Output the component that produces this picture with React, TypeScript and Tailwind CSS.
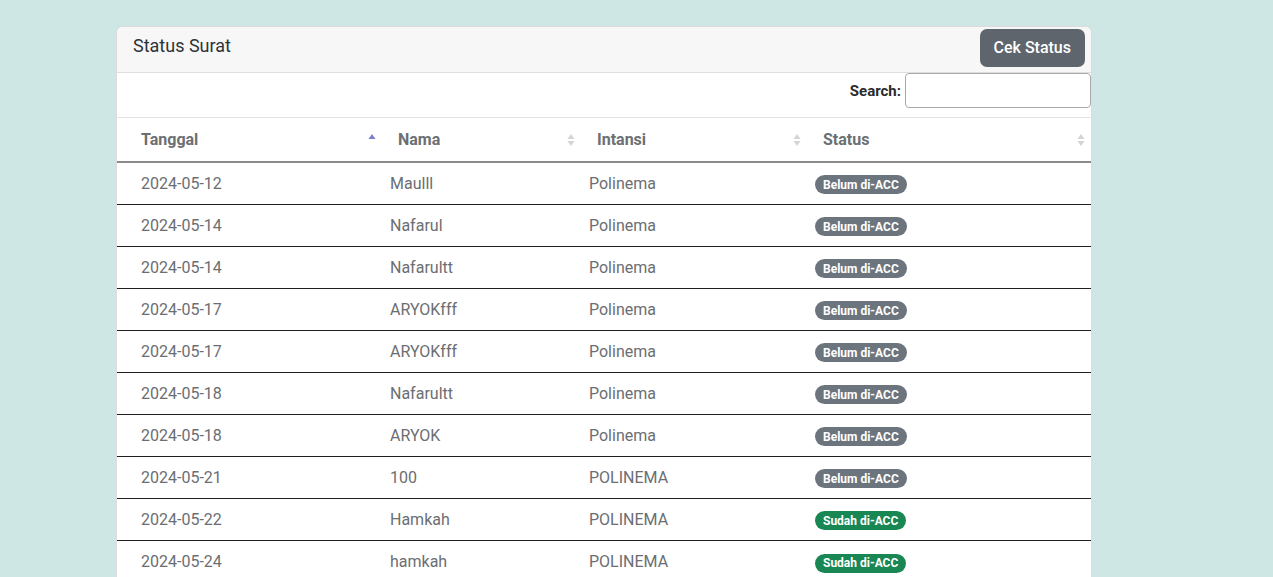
import { type ReactNode } from "react";

// ── Data ─────────────────────────────────────────────────────────────

type Row = { tanggal: string; nama: string; intansi: string; acc: boolean };

const ROWS: Row[] = [
	{ tanggal: "2024-05-12", nama: "Maulll", intansi: "Polinema", acc: false },
	{ tanggal: "2024-05-14", nama: "Nafarul", intansi: "Polinema", acc: false },
	{ tanggal: "2024-05-14", nama: "Nafarultt", intansi: "Polinema", acc: false },
	{ tanggal: "2024-05-17", nama: "ARYOKfff", intansi: "Polinema", acc: false },
	{ tanggal: "2024-05-17", nama: "ARYOKfff", intansi: "Polinema", acc: false },
	{ tanggal: "2024-05-18", nama: "Nafarultt", intansi: "Polinema", acc: false },
	{ tanggal: "2024-05-18", nama: "ARYOK", intansi: "Polinema", acc: false },
	{ tanggal: "2024-05-21", nama: "100", intansi: "POLINEMA", acc: false },
	{ tanggal: "2024-05-22", nama: "Hamkah", intansi: "POLINEMA", acc: true },
	{ tanggal: "2024-05-24", nama: "hamkah", intansi: "POLINEMA", acc: true },
];

const GRID = "grid grid-cols-[265px_199px_226px_284px]";

// ── Sort arrows ──────────────────────────────────────────────────────

function SortIcon({ active }: { active?: boolean }) {
	if (active) {
		return (
			<svg width="8" height="14" viewBox="0 0 8 14" className="shrink-0">
				<path d="M4 1 L7.5 6 L0.5 6 Z" fill="#7b7fd0" />
			</svg>
		);
	}
	return (
		<svg width="8" height="14" viewBox="0 0 8 14" className="shrink-0">
			<path d="M4 1 L7.5 6 L0.5 6 Z" fill="#d4d4d4" />
			<path d="M4 13 L7.5 8 L0.5 8 Z" fill="#d4d4d4" />
		</svg>
	);
}

function HeadCell({ children, first, active }: { children: ReactNode; first?: boolean; active?: boolean }) {
	return (
		<div
			className={`flex h-[43px] items-center justify-between pr-[6px] ${first ? "pl-[24px]" : "pl-[16px]"}`}
		>
			<span className="text-[16px] font-bold text-[#6c6f73]">{children}</span>
			<SortIcon active={active} />
		</div>
	);
}

function Badge({ acc }: { acc: boolean }) {
	return (
		<span
			className={`inline-flex h-[19px] items-center rounded-full px-[8px] text-[12px] font-bold leading-none text-white ${acc ? "bg-[#198754]" : "bg-[#6c757d]"}`}
		>
			{acc ? "Sudah di-ACC" : "Belum di-ACC"}
		</span>
	);
}

// ── Page ─────────────────────────────────────────────────────────────

export default function App() {
	return (
		<div
			className="h-[577px] overflow-hidden bg-[#cfe7e4] pt-[26px] pl-[116px]"
			style={{ fontFamily: "Roboto, 'Liberation Sans', sans-serif" }}
		>
			<div className="w-[976px] overflow-hidden rounded-t-[7px] border border-[#dcdcdc] bg-white">
				{/* Header */}
				<div className="flex h-[46px] items-start justify-between border-b border-[#dedede] bg-[#f7f7f7] pl-[16px] pr-[6px] pt-[2px]">
					<h2 className="mt-[3px] text-[18px] font-normal text-[#2e3338]">Status Surat</h2>
					<button className="h-[38px] rounded-[7px] bg-[#5e656c] px-[14px] text-[16px] font-medium text-white">
						Cek Status
					</button>
				</div>

				{/* Search */}
				<div className="flex h-[45px] items-start justify-end gap-[4px] border-b border-[#e3e3e3]">
					<label className="mt-[7px] text-[15px] font-bold text-[#2b2b2b]">Search:</label>
					<input
						type="text"
						className="h-[35px] w-[186px] rounded-[4px] border border-[#a9a9a9] bg-white outline-none"
					/>
				</div>

				{/* Table head */}
				<div className={`${GRID} border-b-2 border-[#8a8a8a]`}>
					<HeadCell first active>Tanggal</HeadCell>
					<HeadCell>Nama</HeadCell>
					<HeadCell>Intansi</HeadCell>
					<HeadCell>Status</HeadCell>
				</div>

				{/* Rows */}
				{ROWS.map((r, i) => (
					<div
						key={i}
						className={`${GRID} h-[42px] items-center text-[16px] text-[#6b6e72] ${i < ROWS.length - 1 ? "border-b border-[#1f1f1f]" : ""}`}
					>
						<div className="pl-[24px]">{r.tanggal}</div>
						<div className="pl-[8px]">{r.nama}</div>
						<div className="pl-[8px]">{r.intansi}</div>
						<div className="pl-[8px]">
							<Badge acc={r.acc} />
						</div>
					</div>
				))}
			</div>
		</div>
	);
}
